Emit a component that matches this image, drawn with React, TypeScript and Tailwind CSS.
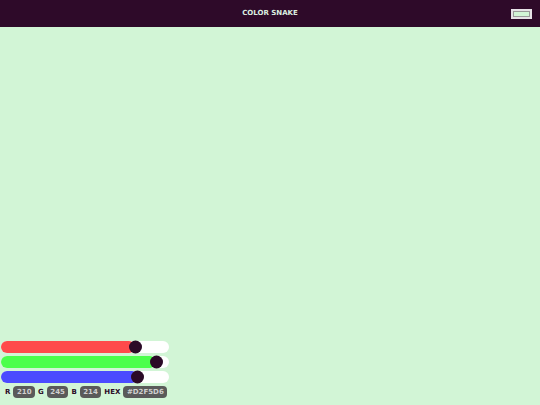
import React from "react";

const R = 210, G = 245, B = 214;
const TRACK = 168;
const KNOB = 13;

function Slider({ value, fill }: { value: number; fill: string }) {
  const center = KNOB / 2 + (value / 255) * (TRACK - KNOB);
  return (
    <div className="relative h-[12px] w-[168px] rounded-full bg-white">
      <div className={`absolute left-0 top-0 h-full rounded-full ${fill}`} style={{ width: center }} />
      <div
        className="absolute top-1/2 h-[13px] w-[13px] -translate-y-1/2 rounded-full bg-[#2b0a27]"
        style={{ left: center - KNOB / 2 }}
      />
    </div>
  );
}

function Chip({ children }: { children: React.ReactNode }) {
  return (
    <span className="flex h-[12px] items-center rounded-[4px] bg-[#5a5a5a] px-[3.5px] text-[7px] font-bold leading-none text-[#d0d0d0]">
      {children}
    </span>
  );
}

export default function App() {
  const hex = "#" + [R, G, B].map((v) => v.toString(16).padStart(2, "0")).join("").toUpperCase();
  return (
    <div
      className="flex h-[405px] w-[540px] flex-col bg-[#d2f5d6]"
      style={{ fontFamily: '"DejaVu Sans", Verdana, sans-serif' }}
    >
      <header className="grid h-[27px] grid-cols-3 items-center bg-[#2e0a29]">
        <div />
        <div className="text-center text-[7px] font-bold text-[#dceee0]">COLOR SNAKE</div>
        <div className="flex justify-end pr-[8px]">
          <button className="h-[10px] w-[21px] border-2 border-[#e6e2e6] bg-[#e6e2e6] p-0">
            <div className="h-full w-full border border-[#9a9a9a] bg-[#d2f5d6]" />
          </button>
        </div>
      </header>
      <main className="flex flex-1 flex-col justify-end gap-[3px] pb-[7px] pl-[1px]">
        <Slider value={R} fill="bg-[#ff4b4b]" />
        <Slider value={G} fill="bg-[#4bff4b]" />
        <Slider value={B} fill="bg-[#4b4bff]" />
        <div className="flex items-center gap-[2px] pl-[4px] text-[7px] font-bold leading-none text-[#2b0a27]">
          <span className="pr-[1px]">R</span>
          <Chip>{R}</Chip>
          <span className="px-[1px]">G</span>
          <Chip>{G}</Chip>
          <span className="px-[1px]">B</span>
          <Chip>{B}</Chip>
          <span className="px-[1px]">HEX</span>
          <Chip>{hex}</Chip>
        </div>
      </main>
    </div>
  );
}
